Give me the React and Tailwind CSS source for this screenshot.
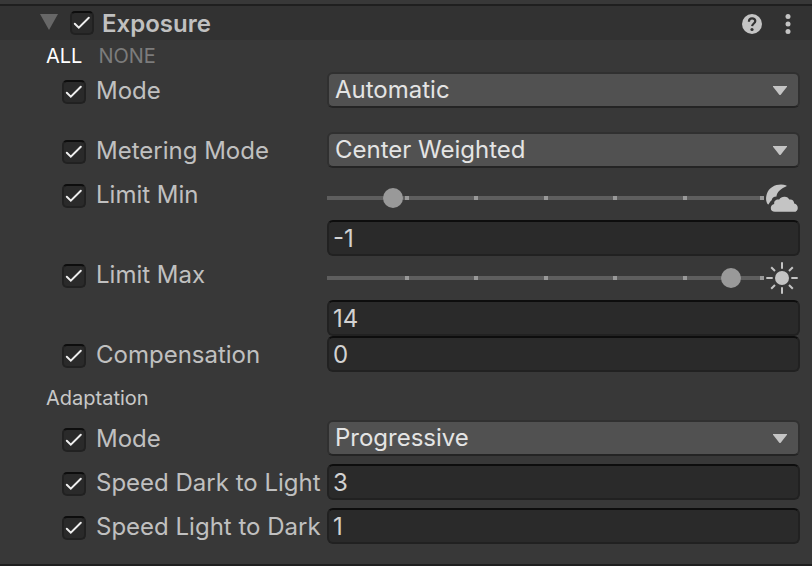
import { useState } from "react";

function Check({ id, label }) {
  const [on, setOn] = useState(true);
  return (
    <span className="grid size-6 shrink-0">
      <input
        id={id}
        type="checkbox"
        aria-label={label}
        checked={on}
        onChange={() => setOn(!on)}
        className="[grid-area:1/1] size-6 appearance-none rounded-[5px] border-2 border-[#212121] border-t-[#0d0d0d] bg-[#2a2a2a]"
      />
      {on && (
        <svg viewBox="0 0 24 24" className="pointer-events-none [grid-area:1/1] size-6" fill="none" stroke="#eeeeee" strokeWidth="2" strokeLinecap="round">
          <path d="M4.800 12.800 8.800 16.600 18.800 6.800" />
        </svg>
      )}
    </span>
  );
}

function Row({ id, label, children }) {
  return (
    <div className="flex items-start">
      <div className="flex h-9 w-[265px] shrink-0 items-center gap-[10px]">
        <span className="pt-1">
          <Check id={id + "-override"} label={"Override " + label} />
        </span>
        <label htmlFor={id} className="pt-[2px] whitespace-nowrap">{label}</label>
      </div>
      <div className="flex min-w-0 flex-1 flex-col gap-2">{children}</div>
    </div>
  );
}

function Dropdown({ id, options }) {
  return (
    <div className="grid h-9">
      <select
        id={id}
        className="[grid-area:1/1] h-9 w-full appearance-none rounded-[6px] border-2 border-[#303030] border-b-[#242424] bg-[#515151] px-[6px] leading-7 text-[#e4e4e4]"
      >
        {options.map((o) => (
          <option key={o}>{o}</option>
        ))}
      </select>
      <svg viewBox="0 0 14 9" className="pointer-events-none [grid-area:1/1] mr-[13px] h-[9px] w-[14px] self-center justify-self-end" fill="#c4c4c4">
        <path d="M0 0H14V.8L7.5 9H6.5L0 .8Z" />
      </svg>
    </div>
  );
}

function Field({ id, value, label }) {
  return (
    <input
      id={id}
      type="text"
      aria-label={label}
      defaultValue={value}
      className="h-9 w-full rounded-[6px] border-2 border-[#212121] border-t-[#0d0d0d] bg-[#2a2a2a] px-1 pt-[2px] text-[#d2d2d2]"
    />
  );
}

function Slider({ id, value, icon }) {
  return (
    <div className="flex h-9 items-center pt-2">
      <div className="grid h-5 flex-1 items-center">
        <div className="[grid-area:1/1] grid h-1 grid-cols-[82fr_69fr_70fr_69fr_70fr_77fr] bg-[#5e5e5e]">
          {[0, 1, 2, 3, 4, 5].map((t) => (
            <span key={t} className="size-1 justify-self-end bg-[#999999]" />
          ))}
        </div>
        <input
          id={id}
          type="range"
          min="-3.5"
          max="15"
          step="0.5"
          defaultValue={value}
          className="[grid-area:1/1] h-5 w-full appearance-none bg-transparent [&::-webkit-slider-thumb]:size-5 [&::-webkit-slider-thumb]:appearance-none [&::-webkit-slider-thumb]:rounded-full [&::-webkit-slider-thumb]:bg-[#999999]"
        />
      </div>
      {icon}
    </div>
  );
}

function MoonCloud() {
  return (
    <svg viewBox="0 0 36 32" className="h-8 w-9 shrink-0" fill="#c4c4c4">
      <path d="M22.500 3.400C14.500 .9 5.500 4 2.800 12c-1.400 4.500-.6 8.500 1.300 10.600.8-.3 1-1.300 1.600-2.100.8-1.100 1.300-1.800 2-2.200.2-2.300 2-3.600 4.800-3.700C12.700 10.500 16.700 6.500 22.500 4.300Z" />
      <path d="M11 29.800C8.300 29.800 6.600 28.200 6.800 25.800c.1-2.200 1.500-3.500 3.400-3.900-.4-3.100 2.100-4.900 5-4.300C16.400 15.600 18.300 14.700 20.700 14.800c2.300.1 3.800 1.200 4.600 2.700 2.700-.5 4.900 1.100 4.900 4 2.100.6 3.600 2.100 3.600 4.400 0 2.400-1.500 3.900-3.800 3.900Z" />
    </svg>
  );
}

function Sun() {
  return (
    <svg viewBox="0 0 36 32" className="h-8 w-9 shrink-0" fill="#c4c4c4" stroke="#c4c4c4" strokeWidth="2">
      <circle cx="18" cy="16" r="7" stroke="none" />
      <path d="M18 .3V6.700M18 25.300V31.700M2.300 16H8.700M27.300 16H33.700M7.200 5.200 11 9M25 23 28.800 26.800M28.800 5.200 25 9M11 23 7.200 26.800" />
    </svg>
  );
}

export default function App() {
  return (
    <main className="min-h-screen bg-[#383838] pt-1 font-['Inter',sans-serif] text-2xl leading-9 text-[#c0c0c0]">
      <section className="border-y-2 border-[#1f1f1f]">
        <header className="flex h-[34px] items-center bg-[#323232] pr-3 pl-10">
          <button type="button" aria-label="Collapse Exposure" className="flex pb-[2px]">
            <svg viewBox="0 0 18 16" className="h-4 w-[18px]" fill="#676767">
              <path d="M0 0H18L9 16Z" />
            </svg>
          </button>
          <span className="ml-3">
            <Check id="exposure" label="Enable Exposure" />
          </span>
          <label htmlFor="exposure" className="ml-2 pt-[2px] font-semibold">Exposure</label>
          <button type="button" aria-label="Help" className="ml-auto flex pt-[2px]">
            <svg viewBox="0 0 20 20" className="size-5">
              <circle cx="10" cy="10" r="10" fill="#c4c4c4" />
              <path d="M6.900 7.700C6.900 5.600 8.100 4.300 10.100 4.300s3.200 1.200 3.200 2.800c0 2.300-3 2.500-3.200 5" fill="none" stroke="#323232" strokeWidth="2.200" />
              <circle cx="10" cy="15.500" r="1.600" fill="#323232" />
            </svg>
          </button>
          <button type="button" aria-label="More options" className="ml-4 flex px-[6px] pt-[2px]">
            <svg viewBox="0 0 10 20" className="h-5 w-[10px]" fill="#c4c4c4">
              <circle cx="4" cy="2.500" r="2.500" />
              <circle cx="4" cy="10" r="2.500" />
              <circle cx="4" cy="17.500" r="2.500" />
            </svg>
          </button>
        </header>

        <div className="flex h-8 items-center gap-4 pl-[46px] text-xl">
          <button type="button" className="text-white">ALL</button>
          <button type="button" className="text-[#7c7c7c]">NONE</button>
        </div>

        <div className="pr-3 pl-[62px]">
          <Row id="mode" label="Mode">
            <Dropdown id="mode" options={["Automatic", "Fixed", "Curve Mapping"]} />
          </Row>
          <div className="mt-6">
            <Row id="metering" label="Metering Mode">
              <Dropdown id="metering" options={["Center Weighted", "Average", "Spot"]} />
            </Row>
          </div>
          <div className="mt-2">
            <Row id="limit-min" label="Limit Min">
              <Slider id="limit-min" value="-1" icon={<MoonCloud />} />
              <Field value="-1" label="Limit Min value" />
            </Row>
            <Row id="limit-max" label="Limit Max">
              <Slider id="limit-max" value="14" icon={<Sun />} />
              <Field value="14" label="Limit Max value" />
            </Row>
            <Row id="compensation" label="Compensation">
              <Field id="compensation" value="0" />
            </Row>
          </div>
        </div>

        <h2 className="flex h-12 items-center pt-1 pl-[46px] text-xl text-[#c8c8c8]">Adaptation</h2>

        <div className="flex flex-col gap-2 pr-3 pb-5 pl-[62px]">
          <Row id="adaptation-mode" label="Mode">
            <Dropdown id="adaptation-mode" options={["Progressive", "Fixed"]} />
          </Row>
          <Row id="dark-to-light" label="Speed Dark to Light">
            <Field id="dark-to-light" value="3" />
          </Row>
          <Row id="light-to-dark" label="Speed Light to Dark">
            <Field id="light-to-dark" value="1" />
          </Row>
        </div>
      </section>
    </main>
  );
}
